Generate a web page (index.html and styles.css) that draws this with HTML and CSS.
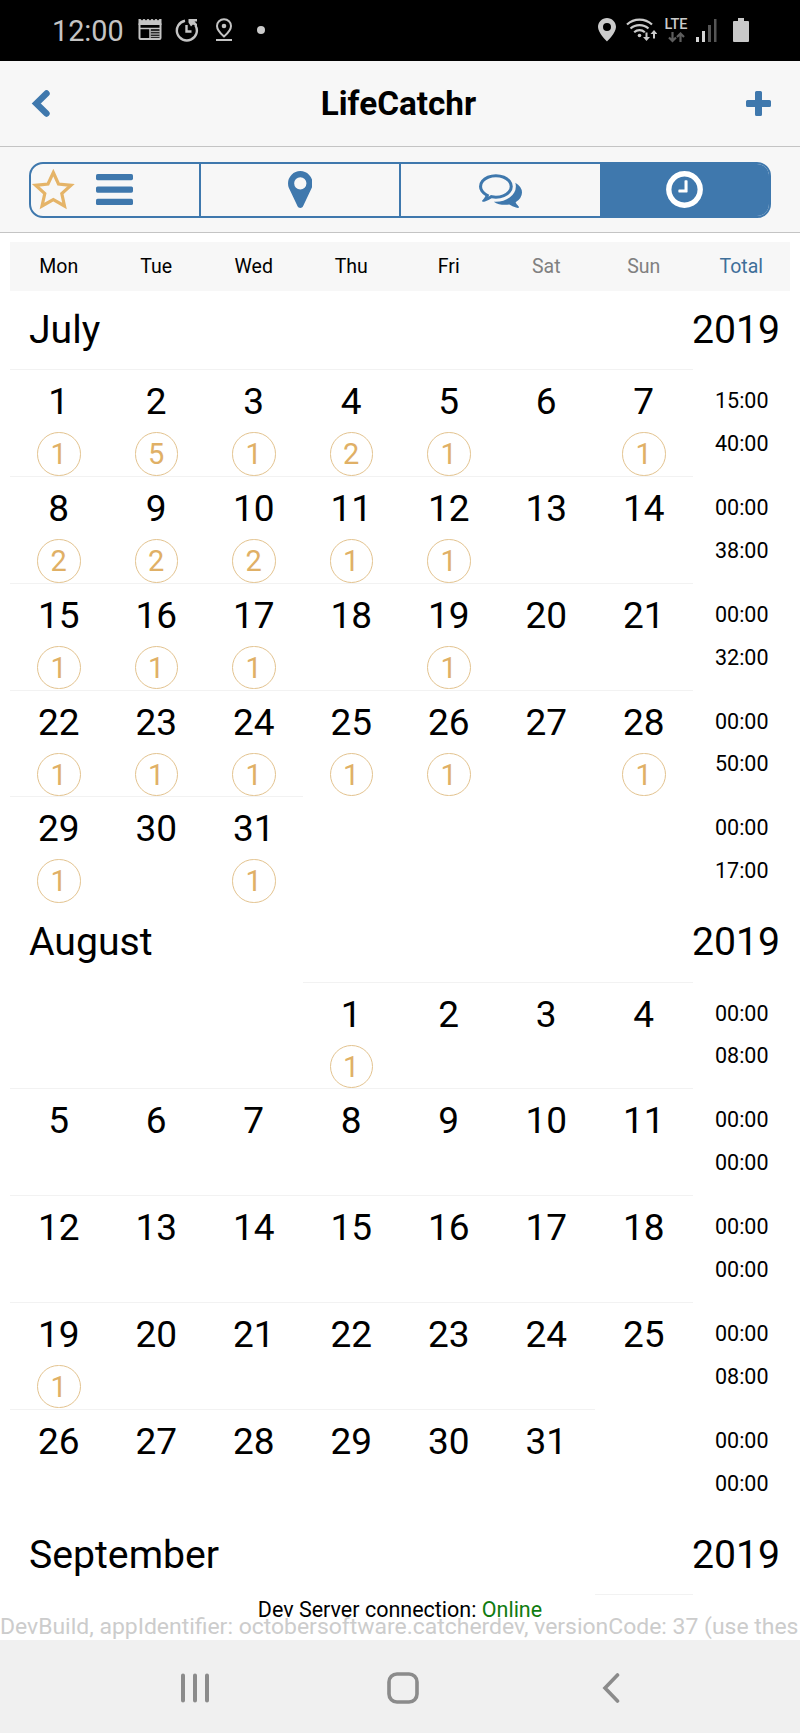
FILE: index.html
```html
<!DOCTYPE html>
<html lang="en-us">
<head>
  <meta charset="UTF-8">
  <title>LifeCatchr</title>
  <link rel="stylesheet" href="styles.css">
</head>
<body>
  <div class="statusbar">
    <div class="status-left">
      <span class="time">12:00</span>
      <svg class="ic-news" width="24" height="22" viewBox="0 0 24 22">
        <path d="M.5 0h2l1.500 1.500L5.500 0h1L8 1.500 9.500 0h1L12 1.500 13.500 0h1L16 1.500 17.500 0h1L20 1.500 21.500 0h2v6H.5z" fill="#c4c4c4"/>
        <rect x="1.500" y="4" width="21" height="16" rx="1" fill="none" stroke="#c4c4c4" stroke-width="2"/>
        <path d="M2 9.500h20M12 9v11" stroke="#c4c4c4" stroke-width="1.500"/>
        <path d="M12 12.500h10M12 15h10M12 17.500h10" stroke="#a8a8a8" stroke-width="1.400"/>
      </svg>
      <svg class="ic-timer" width="24" height="24" viewBox="0 0 24 24" fill="none" stroke="#c4c4c4" stroke-width="2.400">
        <path d="M10 2.700A10 10 0 1 0 20.500 7.500M11.500 7v6.500h5"/>
        <path d="M13.500 1H22v2.500h-2.500L22 6v3L18 6.500l-2 2-2.500-4z" fill="#c4c4c4" stroke="none"/>
      </svg>
      <svg class="ic-place" width="18" height="24" viewBox="0 0 18 24">
        <path d="M9 1.200c-4 0-7 3-7 6.800 0 4.500 7 10.500 7 10.500s7-6 7-10.500c0-3.800-3-6.800-7-6.800z" fill="none" stroke="#c4c4c4" stroke-width="2"/>
        <circle cx="9" cy="8" r="2.300" fill="#c4c4c4"/>
        <path d="M1 22h16" stroke="#c4c4c4" stroke-width="2"/>
      </svg>
      <span class="dot"></span>
    </div>
    <div class="status-right">
      <svg width="18" height="24" viewBox="0 0 18 24">
        <path fill-rule="evenodd" d="M9 0C4 0 0 4 0 9c0 6 9 14.500 9 14.500S18 15 18 9c0-5-4-9-9-9zm0 5a4 4 0 1 1 0 8 4 4 0 0 1 0-8z" fill="#cbcbcb"/>
      </svg>
      <svg class="ic-wifi" width="31" height="24" viewBox="0 0 31 24" fill="none" stroke="#cbcbcb" stroke-width="2.200">
        <path d="M1 6.500c7-6.500 18-6.500 25 0M4.500 10.500c5-4.600 13-4.600 18 0M8.200 14.200c3-2.700 7.600-2.700 10.600 0"/>
        <circle cx="13.500" cy="17.500" r="1.800" fill="#cbcbcb" stroke="none"/>
        <path d="M20.500 14.500v6M28 20.500v-6" stroke-width="2"/>
        <path d="M17 19h7l-3.500 4zM24.500 16h7L28 12z" fill="#cbcbcb" stroke="none"/>
      </svg>
      <div class="lte">
        <span>LTE</span>
        <svg width="17" height="11" viewBox="0 0 17 11" fill="none" stroke="#5e5e5e" stroke-width="2.200">
          <path d="M4.500 0v9M1 5.500l3.500 3.500L8 5.500M12.500 10V1M9 5l3.500-3.500L16 5"/>
        </svg>
      </div>
      <svg class="ic-signal" width="21" height="23" viewBox="0 0 21 23">
        <path d="M0 18h3v5H0zM6 12h3v11H6z" fill="#d5d5d5"/>
        <path d="M12 6h3v17h-3zM18 0h2.500v23H18z" fill="#555"/>
      </svg>
      <svg class="ic-battery" width="16" height="24" viewBox="0 0 16 24">
        <path d="M5 0h6v3h4a1 1 0 0 1 1 1v19a1 1 0 0 1-1 1H1a1 1 0 0 1-1-1V4a1 1 0 0 1 1-1h4z" fill="#c8c8c8"/>
      </svg>
    </div>
  </div>

  <div class="header">
    <svg width="20" height="30" viewBox="0 0 20 30">
      <path d="M15.500 4.500L5.300 14.500l10.200 10" fill="none" stroke="#3f78ad" stroke-width="6.400" stroke-linecap="round"/>
    </svg>
    <h1>LifeCatchr</h1>
    <svg width="25" height="25" viewBox="0 0 25 25">
      <path d="M10.500 0h4q1.500 0 1.500 1.500V9h7.500q1.500 0 1.500 1.500v4q0 1.500-1.500 1.500H16v7.500q0 1.500-1.500 1.500h-4Q9 25 9 23.500V16H1.500Q0 16 0 14.500v-4Q0 9 1.500 9H9V1.500Q9 0 10.500 0z" fill="#3f78ad"/>
    </svg>
  </div>

  <div class="tabs-bar">
    <div class="tabs">
      <div class="tab tab-list">
        <svg width="45" height="43" viewBox="0 0 45 43">
          <path d="M22.300 4.500l5.200 11.500 12.500 1.300-9.200 8.200L33.500 38l-11.200-6.300L11 38l2.800-12.500-9.200-8.200L17 16z" fill="none" stroke="#e5b468" stroke-width="3.200"/>
        </svg>
        <svg width="37" height="31" viewBox="0 0 37 31" fill="#3f78ad">
          <rect width="37" height="6.200" rx="1.600"/>
          <rect y="12.500" width="37" height="6.200" rx="1.600"/>
          <rect y="24.800" width="37" height="6.200" rx="1.600"/>
        </svg>
      </div>
      <div class="tab">
        <svg width="24.600" height="43" viewBox="0 0 1024 1792" fill="#3f78ad">
          <path d="M768 640q0-106-75-181t-181-75-181 75-75 181 75 181 181 75 181-75 75-181zm256 0q0 109-33 179l-364 774q-16 33-47.500 52t-67.500 19-67.500-19-46.500-52l-365-774q-33-70-33-179 0-212 150-362t362-150 362 150 150 362z"/>
        </svg>
      </div>
      <div class="tab tab-chat">
        <svg width="43" height="43" viewBox="0 0 1792 1792" fill="#3f78ad">
          <path d="M704 384q-153 0-286 52t-211.500 141-78.500 191q0 82 53 158t149 132l97 56-35 84q34-20 62-39l44-31 53 10q78 14 153 14 153 0 286-52t211.500-141 78.500-191-78.500-191-211.500-141-286-52zm0-128q191 0 353.500 68.500t256.500 186.500 94 257-94 257-256.500 186.500-353.500 68.500q-86 0-176-16-124 88-278 128-36 9-86 16h-3q-11 0-20.500-8t-11.500-21q-1-3-1-6.500t.5-6.500 2-6l2.500-5 3.500-5.500 4-5 4.500-5 4-4.500q5-6 23-25t26-29.500 22.500-29 25-38.500 20.500-44q-124-72-195-177t-71-224q0-139 94-257t256.500-186.500 353.500-68.500zm822 1169q10 24 20.500 44t25 38.500 22.500 29 26 29.500 23 25q1 1 4 4.500t4.500 5 4 5 3.500 5.500l2.500 5 2 6 .5 6.500-1 6.500q-3 14-13 22t-22 7q-50-7-86-16-154-40-278-128-90 16-176 16-271 0-472-132 58 4 88 4 161 0 309-45t264-129q125-92 192-212t67-254q0-77-23-152 129 71 204 178t75 230q0 120-71 224.500t-195 176.500z"/>
        </svg>
      </div>
      <div class="tab active">
        <svg width="43" height="43" viewBox="0 0 1792 1792" fill="#fff">
          <path d="M1024 544v448q0 14-9 23t-23 9h-320q-14 0-23-9t-9-23v-64q0-14 9-23t23-9h224v-352q0-14 9-23t23-9h64q14 0 23 9t9 23zm416 352q0-148-73-273t-198-198-273-73-273 73-198 198-73 273 73 273 198 198 273 73 273-73 198-198 73-273zm224 0q0 209-103 385.500t-279.500 279.500-385.500 103-385.500-103-279.500-279.500-103-385.500 103-385.500 279.500-279.500 385.500-103 385.500 103 279.500 279.500 103 385.500z"/>
        </svg>
      </div>
    </div>
  </div>

  <div class="content">
    <div class="weekdays">
      <span>Mon</span>
      <span>Tue</span>
      <span>Wed</span>
      <span>Thu</span>
      <span>Fri</span>
      <span class="weekend">Sat</span>
      <span class="weekend">Sun</span>
      <span class="total-label">Total</span>
    </div>
    <div id="calendar"></div>
  </div>

  <div class="dev-info">
    <div class="connection">Dev Server connection: <span class="online">Online</span></div>
    <div class="build">DevBuild, appIdentifier: octobersoftware.catcherdev, versionCode: 37 (use thes</div>
  </div>

  <div class="navbar">
    <svg width="28" height="30" viewBox="0 0 28 30" stroke="#8b8b8b" stroke-width="4" stroke-linecap="round">
      <path d="M2 2.500v25M14 2.500v25M26 2.500v25"/>
    </svg>
    <svg class="ic-home" width="32" height="32" viewBox="0 0 32 32">
      <rect x="2" y="2" width="28" height="28" rx="8" fill="none" stroke="#8b8b8b" stroke-width="3.600"/>
    </svg>
    <svg width="18" height="30" viewBox="0 0 18 30">
      <path d="M15.500 2L3 15l12.500 13" fill="none" stroke="#8b8b8b" stroke-width="3.600" stroke-linecap="round"/>
    </svg>
  </div>

  <script src="script.js"></script>
</body>
</html>
```
FILE: styles.css
```css
* {
  box-sizing: border-box;
}
body {
  margin: 0;
  width: 800px;
  height: 1733px;
  display: flex;
  flex-direction: column;
  overflow: hidden;
  font-family: Roboto, sans-serif;
  color: #000;
  background: #fff;
}
svg {
  display: block;
  flex-shrink: 0;
}

/* status bar */
.statusbar {
  display: flex;
  justify-content: space-between;
  align-items: center;
  height: 61px;
  flex-shrink: 0;
  padding: 0 51px 1px 52px;
  background: #000;
}
.status-left,
.status-right {
  display: flex;
  align-items: center;
}
.time {
  width: 86px;
  font-size: 28.800px;
  line-height: 34px;
  color: #c4c4c4;
  padding-top: 2px;
}
.ic-timer {
  margin-left: 13px;
}
.ic-place {
  margin-left: 16px;
}
.dot {
  width: 8px;
  height: 8px;
  margin-left: 24px;
  border-radius: 50%;
  background: #cbcbcb;
}
.ic-wifi {
  margin-left: 10px;
}
.lte {
  display: flex;
  flex-direction: column;
  align-items: center;
  width: 24px;
  margin-left: 7px;
  font-size: 14.500px;
  line-height: 14px;
  font-weight: 500;
  color: #cbcbcb;
}
.ic-signal {
  margin-left: 8px;
}
.ic-battery {
  margin-left: 16px;
}

/* header */
.header {
  display: flex;
  justify-content: space-between;
  align-items: center;
  height: 86px;
  flex-shrink: 0;
  padding: 0 29px 0 31px;
  background: #f7f7f7;
  border-bottom: 1px solid #c4c4c4;
}
.header h1 {
  margin: 0;
  font-size: 33.300px;
  line-height: 40px;
  font-weight: 700;
}
.tabs-bar {
  height: 86px;
  flex-shrink: 0;
  padding: 15px 29px 0;
  background: #f7f7f7;
  border-bottom: 1px solid #c4c4c4;
}
.tabs {
  display: grid;
  grid-template-columns: 170px 200px 199px 169px;
  height: 56px;
  border: 2px solid #3f78ad;
  border-radius: 14px;
  overflow: hidden;
}
.tab {
  display: flex;
  justify-content: center;
  align-items: center;
  padding-bottom: 1px;
  border-right: 2px solid #3f78ad;
}
.tab-list {
  justify-content: flex-start;
  gap: 20px;
}
.tab.tab-chat {
  border-right: none;
}
.tab.active {
  background: #3f78ad;
  border-right: none;
}

/* calendar */
.content {
  flex: 1;
  min-height: 0;
  padding: 9px 10px 0;
  overflow: hidden;
}
.weekdays,
.week {
  display: grid;
  grid-template-columns: repeat(8, 97.500px);
}
.weekdays {
  height: 49px;
  line-height: 50px;
  font-size: 19.500px;
  text-align: center;
  background: #f7f7f7;
}
.weekend {
  color: #808080;
}
.total-label {
  color: #3f6f99;
}
.month-title {
  display: flex;
  justify-content: space-between;
  height: 78.300px;
  padding: 0 10px 0 19px;
  font-size: 39.200px;
  line-height: 79px;
}
.week {
  height: 106.800px;
}
.day {
  display: flex;
  flex-direction: column;
  align-items: center;
  border-top: 1px solid #f2f2f2;
}
.day.empty {
  border-top: none;
}
.number {
  height: 62px;
  font-size: 37px;
  line-height: 63px;
}
.count {
  width: 43.500px;
  height: 43.500px;
  border: 1px solid #e3c38f;
  border-radius: 50%;
  font-size: 29px;
  line-height: 42px;
  text-align: center;
  color: #e0b066;
}
.total {
  padding: 11px 0 0 1px;
  font-size: 21.500px;
  line-height: 42.800px;
  text-align: center;
}

/* dev footer */
.dev-info {
  height: 44px;
  flex-shrink: 0;
  padding-top: 1px;
  font-size: 21.500px;
  line-height: 26px;
  white-space: nowrap;
  background: #fff;
}
.connection {
  height: 16px;
  text-align: center;
}
.online {
  color: #107c10;
}
.build {
  overflow: hidden;
  font-size: 22.950px;
  line-height: 27px;
  color: #ccc;
}

.navbar {
  display: flex;
  align-items: center;
  height: 93px;
  flex-shrink: 0;
  padding: 2px 180px 0 181px;
  justify-content: space-between;
  background: #f0f0f0;
}
.ic-home {
  margin-right: 6px;
}
```
FILE: script.js
```js
// offset = weekday of the 1st (0 = Mon), counts = entries per day
const months = [
  {
    name: 'July', year: 2019, offset: 0, days: 31,
    counts: { 1: 1, 2: 5, 3: 1, 4: 2, 5: 1, 7: 1, 8: 2, 9: 2, 10: 2, 11: 1, 12: 1, 15: 1, 16: 1, 17: 1, 19: 1,
      22: 1, 23: 1, 24: 1, 25: 1, 26: 1, 28: 1, 29: 1, 31: 1 },
    totals: [['15:00', '40:00'], ['00:00', '38:00'], ['00:00', '32:00'], ['00:00', '50:00'], ['00:00', '17:00']]
  },
  {
    name: 'August', year: 2019, offset: 3, days: 31,
    counts: { 1: 1, 19: 1 },
    totals: [['00:00', '08:00'], ['00:00', '00:00'], ['00:00', '00:00'], ['00:00', '08:00'], ['00:00', '00:00']]
  },
  // only the top edge of the first week is on screen
  { name: 'September', year: 2019, offset: 6, days: 1, counts: {}, totals: [['', '']], hideNumbers: true }
];

function renderWeek(month, index) {
  let html = '<div class="week">';
  for (let i = 0; i < 7; i++) {
    const day = index * 7 + i - month.offset + 1;
    if (day < 1 || day > month.days) {
      html += '<div class="day empty"></div>';
      continue;
    }
    const count = month.counts[day];
    html += `<div class="day"><div class="number">${month.hideNumbers ? '' : day}</div>`;
    html += count ? `<div class="count">${count}</div>` : '';
    html += '</div>';
  }
  const total = month.totals[index];
  html += `<div class="total"><div>${total[0]}</div><div>${total[1]}</div></div></div>`;
  return html;
}

document.getElementById('calendar').innerHTML = months.map(month => `
  <div class="month-title"><span>${month.name}</span><span>${month.year}</span></div>
  ${month.totals.map((t, index) => renderWeek(month, index)).join('')}
`).join('');
```
